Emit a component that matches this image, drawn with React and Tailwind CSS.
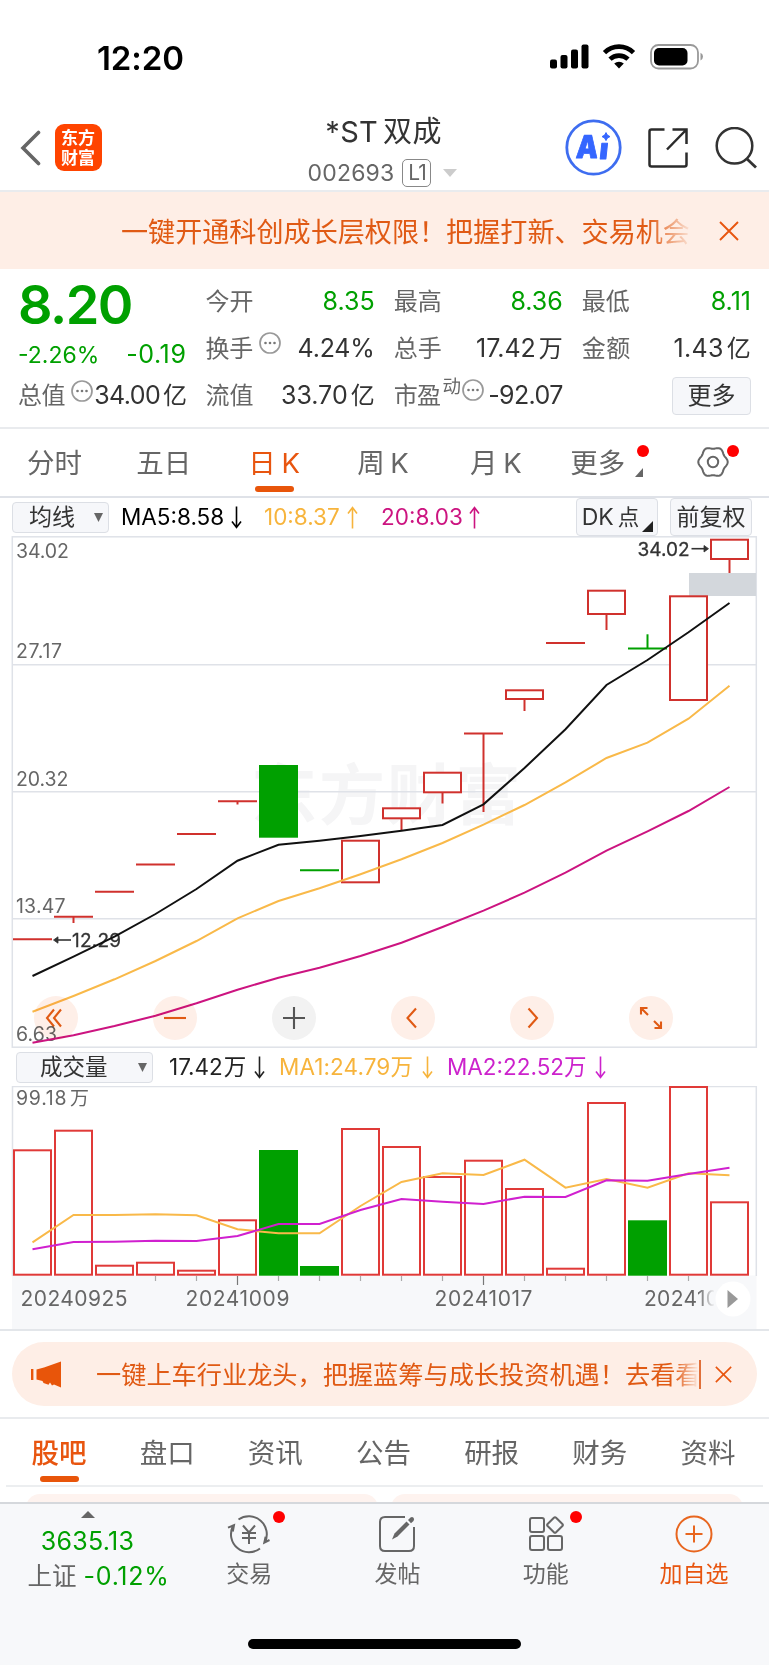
import React from 'react';

const COL_X = 32.5;
const COL_STEP = 41;
const RED = '#d0312d';
const GREEN = '#00a000';

const colX = (i) => COL_X + COL_STEP * i;
const toPoints = (ys) => ys.map((y, i) => `${colX(i)},${y}`).join(' ');

// top / bottom of the body, optional wick end
const candles = [
  { y: 939.3 },
  { y: 916.7, wick: 923 },
  { y: 891.7 },
  { y: 864.5 },
  { y: 834 },
  { y: 801.3, wick: 804.5 },
  { y: 765, bottom: 837.7, down: true },
  { y: 870.3, down: true },
  { y: 840.7, bottom: 882.3 },
  { y: 808.3, bottom: 818.3, wick: 830 },
  { y: 772.7, bottom: 792.3, wick: 803.5 },
  { y: 733.4, wick: 812 },
  { y: 690.3, bottom: 699, wick: 711 },
  { y: 643 },
  { y: 590.7, bottom: 614, wick: 630 },
  { y: 648.4, wick: 634.3, down: true },
  { y: 596.3, bottom: 700 },
  { y: 539.7, bottom: 559, wick: 573 },
];

const ma5 = [976, 956.7, 936.7, 914, 889, 860.7, 844.7, 840.7, 836, 830.7, 825, 804.3, 768, 729.3, 685, 660, 632.3, 603];
const ma10 = [1011.7, 996, 979.3, 961, 941, 918.3, 901, 888.3, 874.3, 859.3, 843, 824.7, 805, 782.3, 758, 742.7, 718.7, 685.7];
const ma20 = [1042.7, 1035.3, 1026, 1015.7, 1003.3, 989.7, 977.7, 967.7, 956, 942.7, 927, 910.7, 892.7, 872.7, 850.7, 831.3, 811, 787];

const volumes = [1150.3, 1130.7, 1265.7, 1262.7, 1270.7, 1220.3, 1150, 1266, 1129, 1147, 1177, 1160.7, 1189, 1268.7, 1103, 1220.3, 1087, 1202.3];
const volMa1 = [1242.3, 1215, 1215, 1214.3, 1215.3, 1229.3, 1233.3, 1233.3, 1206, 1182, 1173.3, 1175, 1159.7, 1187.7, 1179, 1187.7, 1173.3, 1175.3];
const volMa2 = [1249.3, 1242, 1241.7, 1240.7, 1241, 1236, 1224, 1224, 1210, 1199, 1201.7, 1204, 1196.7, 1197, 1180.3, 1180.7, 1174, 1167.7];

// six-lobed outline of the settings gear
const gearPoints = Array.from({ length: 120 }, (_, i) => {
  const a = (i / 120) * Math.PI * 2;
  const r = 13.7 + Math.cos(6 * a);
  return `${(16 + r * Math.cos(a)).toFixed(2)},${(15 + 1.04 * r * Math.sin(a)).toFixed(2)}`;
}).join(' ');

const DotsIcon = ({ className }) => (
  <svg width="22" height="22" viewBox="0 0 22 22" className={className}>
    <circle cx="11" cy="11" r="10" fill="none" stroke="#999" strokeWidth="1.7" />
    <circle cx="6.5" cy="11" r="1.3" fill="#777" />
    <circle cx="11" cy="11" r="1.3" fill="#777" />
    <circle cx="15.5" cy="11" r="1.3" fill="#777" />
  </svg>
);

const TrendArrow = ({ up, className }) => (
  <svg width="11" height="23" viewBox="0 0 11 23" className={className}>
    <path
      d={up ? 'M5.5 22.5V1.5M1 7.5L5.5 1.5L10 7.5' : 'M5.5 0.5V21.5M1 15.5L5.5 21.5L10 15.5'}
      fill="none"
      stroke="currentColor"
      strokeWidth="1.6"
    />
  </svg>
);

const CloseIcon = ({ size }) => (
  <svg width={size} height={size} viewBox="0 0 20 20">
    <path d="M1 1L19 19M19 1L1 19" stroke="#e8550f" strokeWidth="1.9" fill="none" />
  </svg>
);

const Caret = () => (
  <svg width="9" height="9" viewBox="0 0 9 9">
    <path d="M0 0H9L4.5 9Z" fill="#666" />
  </svg>
);

const StatusBar = () => (
  <div className="flex h-[112px] shrink-0 items-start justify-between pt-[40px] pr-[65px] pl-[97px]">
    <span className="mt-[1px] text-[33px] leading-[35px] font-semibold tracking-[-0.1px] text-black">12:20</span>
    <svg width="154" height="26" viewBox="0 0 154 26" className="mt-[4px]">
      <rect x="0" y="15.5" width="7" height="9" rx="2" />
      <rect x="10.5" y="11" width="7" height="13.5" rx="2" />
      <rect x="21" y="5.5" width="7" height="19" rx="2" />
      <rect x="31.5" y="0.5" width="7" height="24" rx="2" />
      <g fill="none" stroke="#000" strokeWidth="4.6">
        <path d="M54.5 8.6A20.5 20.5 0 0 1 83.5 8.6" />
        <path d="M60 15.2A13 13 0 0 1 78 15.2" />
      </g>
      <path d="M64.2 19.6A7.2 7.2 0 0 1 73.8 19.6L69 24.6Z" />
      <rect x="101" y="1" width="47" height="23.5" rx="7.5" fill="none" stroke="#999" strokeWidth="1.8" />
      <rect x="104" y="4" width="33.5" height="17.5" rx="5" />
      <path d="M150.5 8.8V16.4Q153 15.4 153 12.6T150.5 8.8Z" fill="#999" />
    </svg>
  </div>
);

const Header = () => (
  <div className="relative flex h-[80px] shrink-0 items-center border-b-2 border-[#e9ebee] pr-[12px] pl-[20px]">
    <svg width="21" height="36" viewBox="0 0 21 36" className="-mt-[7px]">
      <path d="M18.5 2.5L3 18L18.5 33.5" fill="none" stroke="#666" strokeWidth="3.6" strokeLinecap="round" />
    </svg>
    <div className="-mt-[7px] ml-[14px] h-[47px] w-[47px] rounded-[9px] bg-[#ff4400] px-[6px] pt-[3px] font-['Noto_Sans_CJK_SC'] text-[17px] leading-[20px] font-bold text-white">
      东方财富
    </div>
    <div className="absolute inset-x-0 top-0 flex flex-col items-center">
      <h1 className="mt-[1px] -ml-[2px] text-[29px] leading-[38px] tracking-[0.3px] text-[#333]">
        *ST<span className="ml-[5px]">双成</span>
      </h1>
      <div className="mt-[7px] -ml-[4px] flex items-center text-[23px] leading-[30px] text-[#666]">
        <span className="tracking-[0.2px]">002693</span>
        <span className="ml-[8px] flex h-[28px] w-[29px] items-center justify-center rounded-[5px] border-[1.5px] border-[#888] text-[21px] tracking-[-1px]">L1</span>
        <svg width="14" height="8" viewBox="0 0 14 8" className="ml-[12px]">
          <path d="M0 0H14L7 8Z" fill="#ccc" />
        </svg>
      </div>
    </div>
    <div className="-mt-[7px] ml-auto flex items-center">
      <svg width="57" height="57" viewBox="0 0 57 57">
        <circle cx="28.5" cy="28.5" r="26.7" fill="none" stroke="#3e6df0" strokeWidth="2.8" />
        <g fill="#3566ff" stroke="#3566ff" strokeLinejoin="round" fontWeight="900" fontFamily="Inter">
          <text x="0" y="0" fontSize="31.5" strokeWidth="0.8" textLength="22" lengthAdjust="spacingAndGlyphs" transform="translate(10.5 38.8) skewX(-4)">
            A
          </text>
          <text x="0" y="0" fontSize="29" strokeWidth="1" transform="translate(33.8 40.2) skewX(-6)">
            ı
          </text>
          <path d="M41 13.6Q41.8 16.8 45 17.6Q41.8 18.4 41 21.6Q40.2 18.4 37 17.6Q40.2 16.8 41 13.6Z" strokeWidth="1" />
        </g>
      </svg>
      <svg width="40" height="40" viewBox="0 0 40 40" className="ml-[26px]">
        <path
          d="M16.5 1.5H3.5Q1.5 1.5 1.5 3.5V36.5Q1.5 38.5 3.5 38.5H36.5Q38.5 38.5 38.5 36.5V24.5M24.5 1.5H38.5V16M38 2L19 21.5"
          fill="none"
          stroke="#2b2b2b"
          strokeWidth="2.5"
        />
      </svg>
      <svg width="42" height="42" viewBox="0 0 42 42" className="ml-[27px]">
        <circle cx="19.5" cy="18.8" r="17.8" fill="none" stroke="#333" strokeWidth="2.5" />
        <path d="M31.5 31.5L41 40.5" stroke="#333" strokeWidth="2.8" />
      </svg>
    </div>
  </div>
);

const TopBanner = () => (
  <div className="flex h-[77px] shrink-0 items-center bg-[#feeee6] pl-[121px] text-[27.1px] text-[#e05a14]">
    <div className="w-[573px] overflow-hidden pt-[6px] whitespace-nowrap [mask-image:linear-gradient(to_right,#000_92%,transparent)]">
      一键开通科创成长层权限！把握打新、交易机会
    </div>
    <div className="ml-[25px]">
      <CloseIcon size={20} />
    </div>
  </div>
);

const Stat = ({ label, sup, dots, value, unit, green, className }) => (
  <div className={`flex items-center justify-between whitespace-nowrap ${className || ''}`}>
    <div className="flex items-center text-[24px] text-[#666]">
      {label}
      {sup && <span className="-mt-[18px] ml-[2px] text-[18.5px]">{sup}</span>}
      {dots && <DotsIcon className={sup ? '-mt-[11px] ml-[2px]' : '-mt-[11px] ml-[6px]'} />}
    </div>
    <div className={`text-[25px] ${green ? 'text-[#00a000]' : 'text-[#333]'}`}>
      {value}
      {unit && <span className="ml-[3px] text-[24px]">{unit}</span>}
    </div>
  </div>
);

const Quote = () => (
  <div className="flex h-[160px] shrink-0 gap-[19px] border-b-2 border-[#e9ebee] pr-[18px] pl-[18px]">
    <div className="flex w-[168.5px] flex-col">
      <div className="mt-[8px] h-[56px] text-[54px] leading-[56px] font-semibold tracking-[-1.5px] text-[#00a000]">8.20</div>
      <div className="mt-[9px] flex h-[26px] items-center justify-between text-[23px] text-[#00a000]">
        <span>-2.26%</span>
        <span className="text-[25px] tracking-[0.6px]">-0.19</span>
      </div>
      <Stat label="总值" dots value="34.00" unit="亿" className="mt-[5px] h-[46px] tracking-[-0.6px]" />
    </div>
    <div className="grid flex-1 grid-cols-3 grid-rows-[46px_47px_47px] gap-x-[19px] pt-[10px]">
      <Stat label="今开" value="8.35" green />
      <Stat label="最高" value="8.36" green />
      <Stat label="最低" value="8.11" green />
      <Stat label="换手" dots value="4.24%" className="tracking-[-0.2px]" />
      <Stat label="总手" value="17.42" unit="万" />
      <Stat label="金额" value="1.43" unit="亿" className="tracking-[0.3px]" />
      <Stat label="流值" value="33.70" unit="亿" />
      <Stat label="市盈" sup="动" dots value="-92.07" className="tracking-[-0.6px]" />
      <div className="flex items-center justify-end">
        <button className="h-[38px] w-[79px] rounded-[4px] border-[1.5px] border-[#dcdfe5] bg-[#f6f7fa] text-[24px] leading-none text-[#333]">
          更多
        </button>
      </div>
    </div>
  </div>
);

const RedDot = ({ className }) => <span className={`absolute h-[12px] w-[12px] rounded-full bg-[#ff0000] ${className}`} />;

const periods = [
  { label: '分时', pad: 'pr-[1px]' },
  { label: '五日', pad: 'pr-[2px]' },
  { label: '日 K', pad: 'pr-[1px]', active: true },
  { label: '周 K', pad: 'pr-[3px]' },
  { label: '月 K', pad: 'pl-[3px]' },
];

const PeriodTabs = () => (
  <div className="grid h-[69px] shrink-0 grid-cols-7 border-b-2 border-[#dfe2e8] text-[27.5px] text-[#666]">
    {periods.map((p) => (
      <div key={p.label} className={`relative flex items-center justify-center pt-[2px] [word-spacing:-2px] ${p.pad}`}>
        <span className={p.active ? 'text-[#e8550f]' : ''}>{p.label}</span>
        {p.active && <span className="absolute bottom-[4px] h-[6px] w-[39px] rounded-[3px] bg-[#e8550a]" />}
      </div>
    ))}
    <div className="relative flex items-center justify-center pt-[2px] pr-[13px]">
      更多
      <RedDot className="top-[16px] left-[88px]" />
      <svg width="8" height="9" viewBox="0 0 8 9" className="absolute top-[39px] left-[86px]">
        <path d="M8 0V9H0Z" fill="#666" />
      </svg>
    </div>
    <div className="relative flex items-center justify-center pr-[3px]">
      <svg width="32" height="30" viewBox="0 0 32 30" className="-mt-[1px]">
        <polygon points={gearPoints} fill="none" stroke="#666" strokeWidth="2" strokeLinejoin="round" />
        <circle cx="16" cy="15" r="5.2" fill="none" stroke="#666" strokeWidth="2" />
      </svg>
      <RedDot className="top-[16px] right-[30px]" />
    </div>
  </div>
);

const PriceLegend = () => (
  <div className="flex h-[38px] shrink-0 items-center pr-[17px] pl-[12px] text-[22.5px] whitespace-nowrap">
    <button className="flex h-[31px] w-[97px] items-center justify-between rounded-[4px] border-[1.5px] border-[#dcdfe5] bg-[#f6f7fa] pr-[5px] pl-[16px] text-[23px] leading-none text-[#333]">
      均线
      <Caret />
    </button>
    <div className="ml-[12px] flex w-[143px] items-center text-black">
      MA5:8.58
      <TrendArrow className="ml-[7px]" />
    </div>
    <div className="flex w-[117px] items-center text-[#f7b43c]">
      10:8.37
      <TrendArrow up className="ml-[7px]" />
    </div>
    <div className="flex items-center text-[#cc1480]">
      20:8.03
      <TrendArrow up className="ml-[6px]" />
    </div>
    <button className="relative ml-auto h-[38px] w-[82px] rounded-[4px] border-[1.5px] border-[#dcdfe5] bg-[#f6f7fa] pr-[13px] text-[23px] leading-none text-[#333]">
      DK<span className="ml-[4px] text-[21.5px]">点</span>
      <svg width="11" height="11" viewBox="0 0 11 11" className="absolute right-[4px] bottom-[3px]">
        <path d="M11 0V11H0Z" fill="#222" />
      </svg>
    </button>
    <button className="ml-[12px] h-[38px] w-[82px] rounded-[4px] border-[1.5px] border-[#dcdfe5] bg-[#f6f7fa] text-[23px] leading-none text-[#333]">
      前复权
    </button>
  </div>
);

const Candle = ({ index, y, bottom, wick, down }) => {
  const x = colX(index);
  const color = down ? GREEN : RED;
  return (
    <g stroke={color} strokeWidth="2">
      {wick && <line x1={x} x2={x} y1={bottom || y} y2={wick} />}
      {bottom && down && <rect x={x - 19.5} y={y} width="39" height={bottom - y} fill={color} stroke="none" />}
      {bottom && !down && <rect x={x - 18.5} y={y} width="37" height={bottom - y} fill="#fff" />}
      {!bottom && <line x1={x - 19.5} x2={x + 19.5} y1={y} y2={y} />}
    </g>
  );
};

const axisLabels = [
  ['34.02', 558, 53],
  ['27.17', 658, 46],
  ['20.32', 786, 52.5],
  ['13.47', 913, 49.5],
  ['6.63', 1040.5, 41],
];

const chartActions = [
  { id: 'first', d: 'M20 13.5L13 22L20 30.5M27 13.5L20 22L27 30.5' },
  { id: 'out', d: 'M11 22H33' },
  { id: 'in', d: 'M11 22H33M22 11V33', gray: true },
  { id: 'prev', d: 'M25 12.5L16.5 22L25 31.5' },
  { id: 'next', d: 'M18.5 12.5L27 22L18.5 31.5' },
  { id: 'full', d: 'M12 18.5V12H18.5M12 12L19 19M32 25.5V32H25.5M32 32L25 25' },
];

const PriceChart = () => (
  <div className="relative h-[512px] shrink-0">
    <svg width="769" height="512" viewBox="0 536 769 512" className="block">
      <text x="251" y="819" fontSize="66" fontWeight="700" fill="#f5f5f6" textLength="270">
        东方财富
      </text>
      <g stroke="#dfe2e8" strokeWidth="1.5" fill="none">
        <rect x="12.3" y="536.8" width="744" height="510.4" />
        <path d="M12 664.8H756M12 791.7H756M12 918.7H756" />
      </g>
      <rect x="689" y="573" width="67" height="23" fill="#d3d7dc" />
      {candles.map((c, i) => (
        <Candle key={i} index={i} {...c} />
      ))}
      <g fontSize="19.5" fill="#666">
        {axisLabels.map(([label, y, w]) => (
          <text key={label} x="16" y={y} textLength={w}>
            {label}
          </text>
        ))}
      </g>
      <g fontSize="19" fill="#333" stroke="#333" strokeWidth="0.3">
        <text x="637.5" y="555.5" textLength="52">34.02</text>
        <text x="72" y="947" textLength="49">12.29</text>
      </g>
      <g stroke="#333" strokeWidth="1.6" fill="#333">
        <path d="M691.5 548.7H706" />
        <path d="M704 545.5L708.5 548.7L704 552Z" strokeWidth="0.8" />
        <path d="M56 940H71" />
        <path d="M58 936.8L53.5 940L58 943.2Z" strokeWidth="0.8" />
      </g>
      <g fill="none" strokeWidth="2">
        <polyline points={toPoints(ma20)} stroke="#cc1480" />
        <polyline points={toPoints(ma10)} stroke="#f9b949" />
        <polyline points={toPoints(ma5)} stroke="#111" />
      </g>
    </svg>
    <div className="absolute bottom-[8px] left-[34px] flex gap-[75px] mix-blend-multiply">
      {chartActions.map((a) => (
        <svg key={a.id} width="44" height="44" viewBox="0 0 44 44">
          <circle cx="22" cy="22" r="22" fill={a.gray ? '#f2f2f2' : '#feefe8'} />
          <path d={a.d} fill="none" stroke={a.gray ? '#555' : '#e05a14'} strokeWidth="2.1" />
        </svg>
      ))}
    </div>
  </div>
);

const VolumeLegend = () => (
  <div className="flex h-[38px] shrink-0 items-center pl-[16px] text-[22.5px] whitespace-nowrap">
    <button className="flex h-[31px] w-[137px] items-center justify-between rounded-[4px] border-[1.5px] border-[#dcdfe5] bg-[#f6f7fa] pr-[5px] pl-[23px] text-[22.5px] leading-none text-[#333]">
      成交量
      <Caret />
    </button>
    <div className="ml-[16px] flex w-[110px] items-center text-[#222]">
      17.42<span className="ml-[1px]">万</span>
      <TrendArrow className="ml-[8px]" />
    </div>
    <div className="flex w-[168px] items-center tracking-[0.1px] text-[#f7b43c]">
      MA1:24.79万
      <TrendArrow className="ml-[9px]" />
    </div>
    <div className="flex items-center text-[#cc22cc]">
      MA2:22.52万
      <TrendArrow className="ml-[8px]" />
    </div>
  </div>
);

const VolumeChart = () => (
  <div className="h-[245px] shrink-0 border-b-2 border-[#e3e6ea]">
    <svg width="769" height="243" viewBox="0 1086 769 243" className="block">
      <defs>
        <linearGradient id="dateFade">
          <stop offset="0" stopColor="#f7f8fa" stopOpacity="0" />
          <stop offset="1" stopColor="#f7f8fa" />
        </linearGradient>
      </defs>
      <rect x="12" y="1275.5" width="744.5" height="54" fill="#f7f8fa" />
      <path d="M12.5 1276V1086.5H756.3V1276" fill="none" stroke="#dfe2e8" strokeWidth="1.5" />
      <g fontSize="19.5" fill="#666">
        <text x="16" y="1105" textLength="50.5">99.18</text>
        <text x="70" y="1105" fontSize="19">万</text>
      </g>
      {volumes.map((y, i) =>
        candles[i].down ? (
          <rect key={i} x={colX(i) - 19.5} y={y} width="39" height={1275.7 - y} fill={GREEN} />
        ) : (
          <rect key={i} x={colX(i) - 18.5} y={y} width="37" height={1274.7 - y} fill="#fff" stroke="#e03a38" strokeWidth="2" />
        )
      )}
      <g strokeWidth="1.2">
        {volumes.map((_, i) => i > 2 && i < 17 && (
          <line
            key={i}
            x1={colX(i)}
            x2={colX(i)}
            y1="1276"
            y2={i === 5 || i === 11 ? 1285 : 1281}
            stroke={i === 5 || i === 11 ? '#777' : '#aaa'}
          />
        ))}
      </g>
      <g fill="none" strokeWidth="2">
        <polyline points={toPoints(volMa1)} stroke="#f9b949" />
        <polyline points={toPoints(volMa2)} stroke="#d020cf" />
      </g>
      <g fontSize="21" fill="#666">
        <text x="20.5" y="1306" textLength="107">20240925</text>
        <text x="185.5" y="1306" textLength="104">20241009</text>
        <text x="434.5" y="1306" textLength="98">20241017</text>
        <text x="644" y="1306" textLength="75">202410</text>
      </g>
      <rect x="698" y="1288" width="17" height="24" fill="url(#dateFade)" />
      <rect x="714" y="1288" width="8" height="24" fill="#f7f8fa" />
      <circle cx="733" cy="1299" r="17.5" fill="#fff" />
      <path d="M727.5 1290V1308L738 1299Z" fill="#999" />
    </svg>
  </div>
);

const PillBanner = () => (
  <div className="flex h-[88px] shrink-0 items-center border-b-2 border-[#e9ebee] px-[12px]">
    <div className="flex h-[64px] flex-1 items-center rounded-full bg-[#feeee6] pl-[19px] text-[25.2px] text-[#e05a14]">
      <svg width="31" height="27" viewBox="0 0 31 27" fill="#e8550a">
        <rect x="0" y="8" width="2.4" height="11" />
        <path d="M5.5 8.5L13 6.5L30 0.5V26.5L23 23.5L21 24.5L19 21.5L17.5 23.8L12.5 22L11.5 20L5.5 18.5Z" />
      </svg>
      <div className="ml-[34px] w-[603px] overflow-hidden pt-[3px] whitespace-nowrap [mask-image:linear-gradient(to_right,#000_96%,transparent)]">
        一键上车行业龙头，把握蓝筹与成长投资机遇！去看看
      </div>
      <span className="h-[29px] w-[2px] bg-[#e0703a]" />
      <div className="ml-[14px]">
        <CloseIcon size={17} />
      </div>
    </div>
  </div>
);

const sections = ['股吧', '盘口', '资讯', '公告', '研报', '财务', '资料'];

const SectionTabs = () => (
  <div className="mx-[6px] flex h-[68px] shrink-0 border-b-2 border-[#eceef0] text-[27.5px] text-[#666]">
    {sections.map((s, i) => (
      <div
        key={s}
        className={`relative flex flex-1 items-center justify-center pt-[3px] pr-[2px] ${i === 0 ? 'font-medium text-[#e8550f]' : ''}`}
      >
        {s}
        {i === 0 && <span className="absolute bottom-[3px] h-[6px] w-[39px] rounded-[3px] bg-[#e8550a]" />}
      </div>
    ))}
  </div>
);

const TradeIcon = () => (
  <svg width="44" height="40" viewBox="0 0 44 40" fill="none" stroke="#666" strokeWidth="2">
    <path d="M11.5 5.5A18 18 0 0 1 37.8 28.5M42.5 26L37.3 28.6L38.6 22.8" />
    <path d="M33 34.5A18 18 0 0 1 6 12M1 13.6L7 11.2L5.8 17.5" />
    <path d="M16 11.5L22 18.5L28 11.5M15 19H29M15 24H29M22 18.5V30" />
  </svg>
);

const PostIcon = () => (
  <svg width="40" height="40" viewBox="0 0 40 40" fill="none" stroke="#666" strokeWidth="2">
    <path d="M28 3H8Q3 3 3 8V32Q3 37 8 37H32Q37 37 37 32V13" />
    <path d="M15 25.5L17.5 19.5L29.5 7.5L32.5 10.5L20.5 22.5Z" fill="#666" stroke="none" />
    <path d="M31 6L33.5 3.5Q35.3 2.5 36.5 3.8T36.5 7L34 9.3Z" fill="#666" stroke="none" />
  </svg>
);

const GridIcon = () => (
  <svg width="36" height="40" viewBox="0 0 36 40" fill="none" stroke="#666" strokeWidth="2">
    <rect x="2" y="4" width="14" height="14" rx="2" />
    <rect x="2" y="22" width="14" height="14" rx="2" />
    <rect x="20" y="22" width="14" height="14" rx="2" />
    <path d="M25.9 3.8Q27 2.7 28.1 3.8L34.4 10Q35.4 11 34.4 12L28.1 18.2Q27 19.3 25.9 18.2L19.6 12Q18.6 11 19.6 10Z" />
  </svg>
);

const AddIcon = () => (
  <svg width="40" height="40" viewBox="0 0 40 40" fill="none" stroke="#e8661f" strokeWidth="2">
    <circle cx="20" cy="20" r="17.5" />
    <path d="M11.5 20H28.5M20 11.5V28.5" />
  </svg>
);

const navItems = [
  { label: '交易', icon: <TradeIcon />, dot: true },
  { label: '发帖', icon: <PostIcon /> },
  { label: '功能', icon: <GridIcon />, dot: true },
  { label: '加自选', icon: <AddIcon />, accent: true },
];

const BottomNav = () => (
  <div className="relative flex h-[163px] shrink-0 border-t-2 border-[#d5d8dc] bg-[#f7f8fa] pr-[1px]">
    <div className="flex w-[175px] flex-col items-center text-[25px] whitespace-nowrap">
      <svg width="14" height="7" viewBox="0 0 14 7" className="mt-[7px]">
        <path d="M7 0L14 7H0Z" fill="#666" />
      </svg>
      <span className="mt-[8px] leading-[30px] tracking-[0.3px] text-[#00a000]">3635.13</span>
      <span className="mt-[5px] pl-[22px] leading-[30px] text-[#666]">
        <span className="text-[24.5px]">上证</span> <span className="tracking-[0.7px] text-[#00a000]">-0.12%</span>
      </span>
    </div>
    {navItems.map((item) => (
      <div key={item.label} className="relative flex flex-1 flex-col items-center pt-[10px]">
        {item.icon}
        {item.dot && <RedDot className="top-[7px] right-[38px]" />}
        <span className={`mt-[4px] text-[23px] leading-[32px] ${item.accent ? 'text-[#e8550f]' : 'text-[#666]'}`}>{item.label}</span>
      </div>
    ))}
    <span className="absolute bottom-[16px] left-[248px] h-[10px] w-[273px] rounded-full bg-black" />
  </div>
);

export default function App() {
  return (
    <div className="flex h-[1665px] w-[769px] flex-col overflow-hidden bg-white font-['Inter','Noto_Sans_CJK_SC',sans-serif]">
      <StatusBar />
      <Header />
      <TopBanner />
      <Quote />
      <PeriodTabs />
      <PriceLegend />
      <PriceChart />
      <VolumeLegend />
      <VolumeChart />
      <PillBanner />
      <SectionTabs />
      <div className="flex min-h-0 flex-1 gap-[13px] overflow-hidden px-[26px] pt-[7px]">
        <div className="h-[40px] flex-1 rounded-[14px] bg-[#fef3ef]" />
        <div className="h-[40px] flex-1 rounded-[14px] bg-[#fef3ef]" />
      </div>
      <BottomNav />
    </div>
  );
}
